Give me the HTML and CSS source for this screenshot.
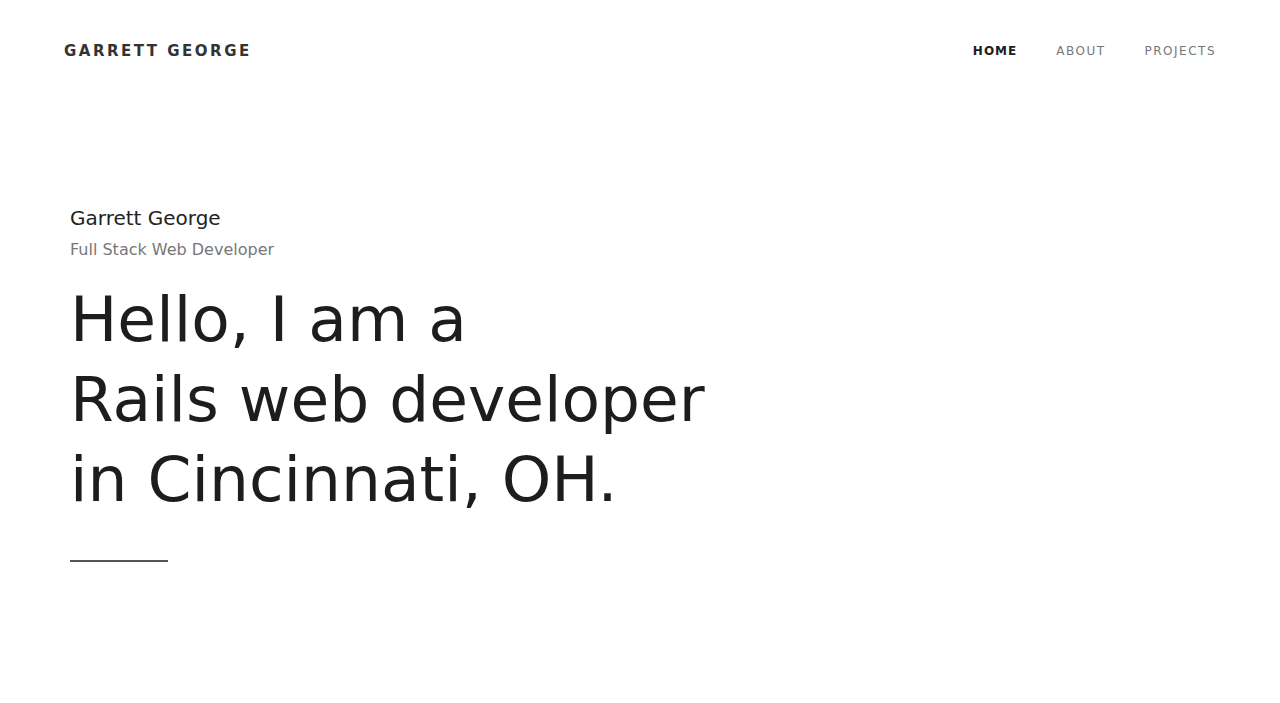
FILE: index.html
```html
<!DOCTYPE html>
<html lang="en">
<head>
<meta charset="utf-8">
<title>Garrett George</title>
<link rel="stylesheet" href="styles.css">
</head>
<body>
<header class="site-header">
  <a class="brand" href="#">GARRETT GEORGE</a>
  <nav class="nav">
    <a class="nav-link active" href="#">HOME</a>
    <a class="nav-link" href="#">ABOUT</a>
    <a class="nav-link" href="#">PROJECTS</a>
  </nav>
</header>
<main class="hero">
  <h2 class="name">Garrett George</h2>
  <p class="role">Full Stack Web Developer</p>
  <h1 class="headline">Hello, I am a<br>Rails web developer<br>in Cincinnati, OH.</h1>
  <div class="rule"></div>
</main>
</body>
</html>
```
FILE: styles.css
```css
* { box-sizing: border-box; }
html, body { margin: 0; padding: 0; background: #fff; }
body {
  font-family: "DejaVu Sans", "Noto Sans", sans-serif;
  color: #1d1d1f;
  width: 1280px;
  height: 703px;
  overflow: hidden;
}
a { text-decoration: none; }
.site-header {
  display: flex;
  justify-content: space-between;
  align-items: center;
  padding: 40px 64px 0 64px;
  height: 62px;
}
.brand {
  font-size: 15px;
  font-weight: 700;
  letter-spacing: 2.5px;
  color: #333;
}
.nav {
  display: flex;
  gap: 39px;
}
.nav-link {
  font-size: 12px;
  letter-spacing: 1.5px;
  color: #777;
}
.nav-link.active {
  color: #1d1d1f;
  font-weight: 700;
  letter-spacing: 1px;
}
.hero {
  padding: 143px 0 0 70px;
}
.name {
  margin: 0;
  font-size: 20px;
  font-weight: 400;
  line-height: 26px;
  color: #222;
}
.role {
  margin: 9px 0 0 0;
  font-size: 16px;
  line-height: 20px;
  color: #777;
}
.headline {
  margin: 20px 0 0 0;
  font-size: 63px;
  font-weight: 400;
  line-height: 80px;
  color: #1d1d1f;
}
.rule {
  margin-top: 40px;
  width: 98px;
  height: 2px;
  background: #555;
}
```
